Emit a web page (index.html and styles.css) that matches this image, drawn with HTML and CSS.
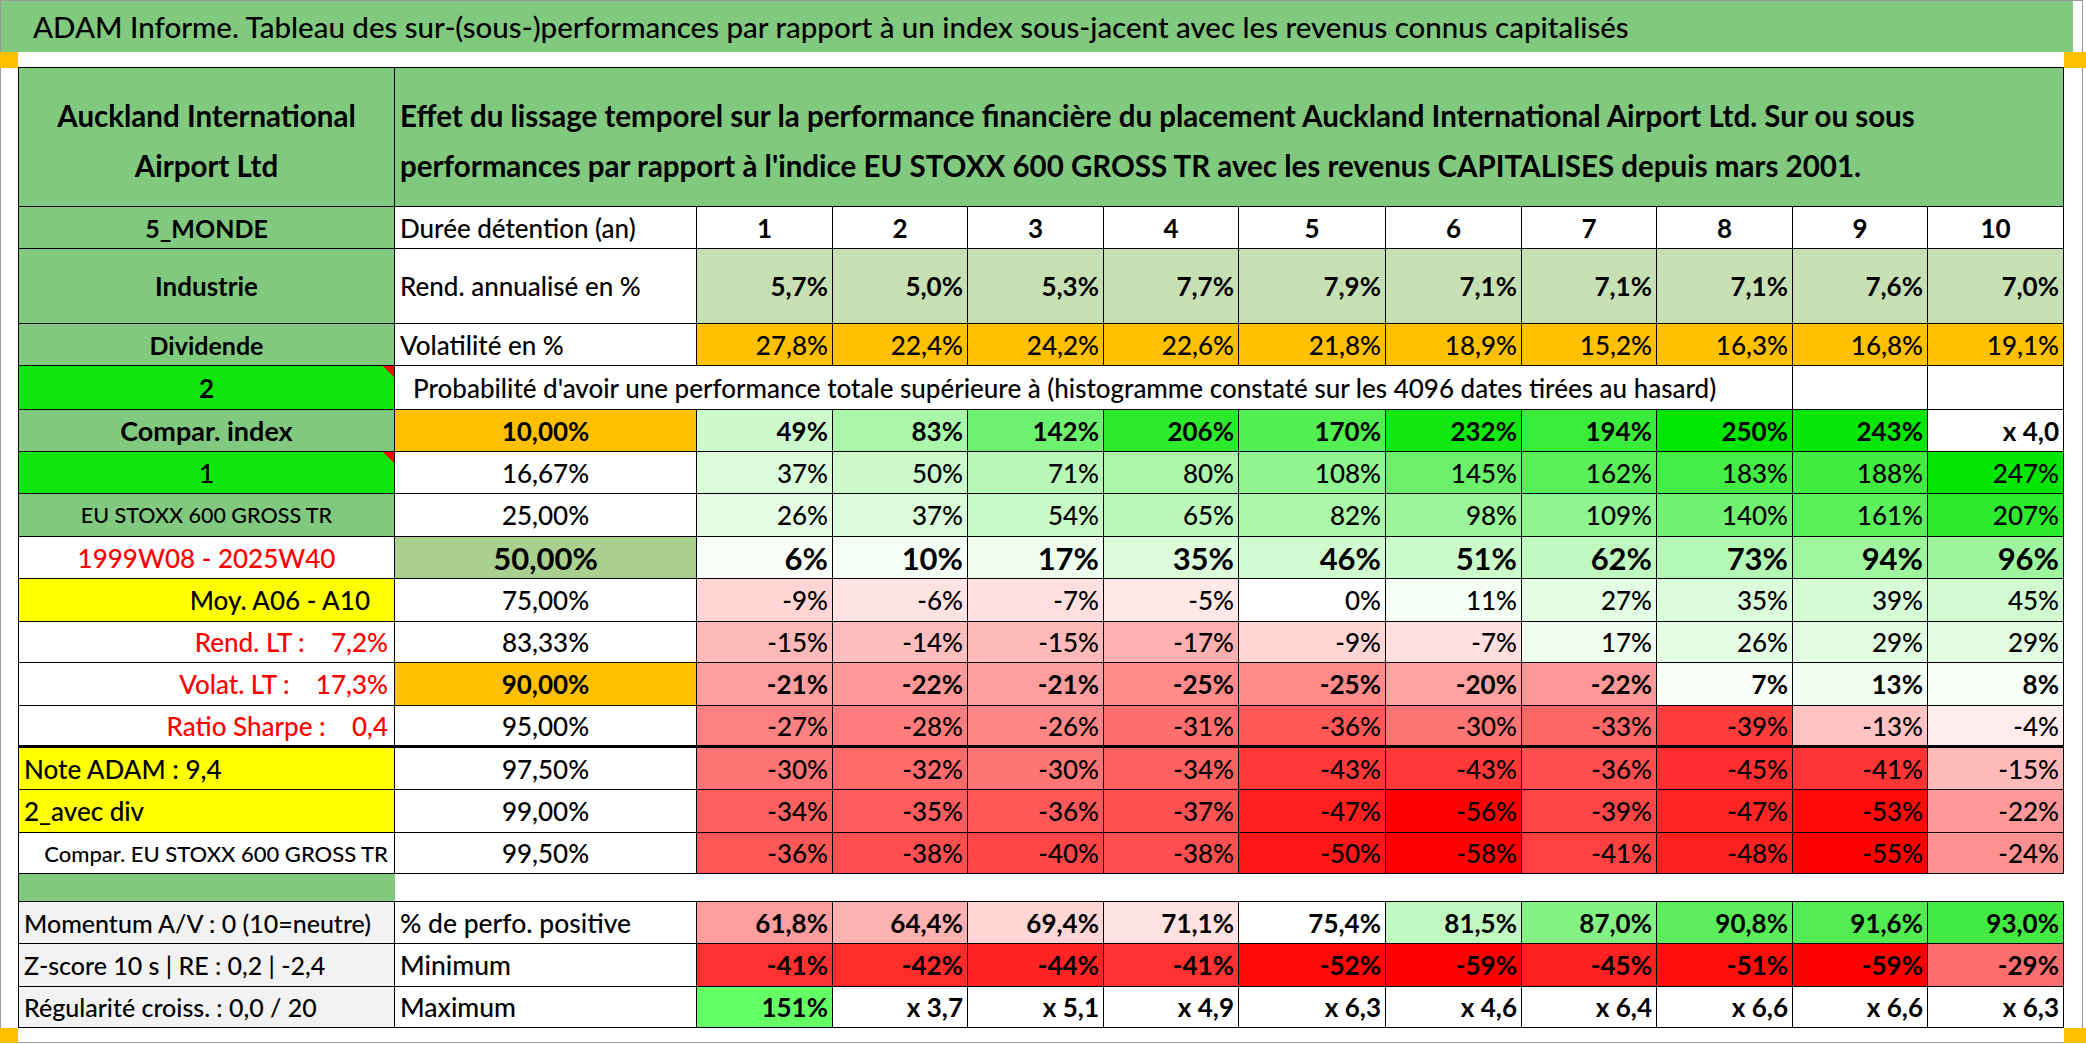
FILE: index.html
```html
<!DOCTYPE html>
<html lang="fr">
<head>
<meta charset="utf-8">
<title>ADAM Informe</title>
<link rel="stylesheet" href="styles.css">
</head>
<body>
<div class="sheet">
  <div class="title">ADAM Informe. Tableau des sur-(sous-)performances par rapport à un index sous-jacent avec les revenus connus capitalisés</div>
  <div class="spacer"></div>
  <div class="grid">
    <!-- header -->
    <div class="c g b hdr hdrA">Auckland International<br>Airport Ltd</div>
    <div class="c g b hdr hdrB">Effet du lissage temporel sur la performance financière du placement Auckland International Airport Ltd. Sur ou sous<br>performances par rapport à l'indice EU STOXX 600 GROSS TR avec les revenus CAPITALISES depuis mars 2001.</div>

    <!-- durée -->
    <div class="c g b lab">5_MONDE</div>
    <div class="c l">Durée détention (an)</div>
    <div class="c b">1</div><div class="c b">2</div><div class="c b">3</div><div class="c b">4</div><div class="c b">5</div>
    <div class="c b">6</div><div class="c b">7</div><div class="c b">8</div><div class="c b">9</div><div class="c b">10</div>

    <!-- rendement -->
    <div class="c g b lab ind">Industrie</div>
    <div class="c l">Rend. annualisé en %</div>
    <div class="c lg b n">5,7%</div><div class="c lg b n">5,0%</div><div class="c lg b n">5,3%</div><div class="c lg b n">7,7%</div><div class="c lg b n">7,9%</div>
    <div class="c lg b n">7,1%</div><div class="c lg b n">7,1%</div><div class="c lg b n">7,1%</div><div class="c lg b n">7,6%</div><div class="c lg b n">7,0%</div>

    <!-- volatilité -->
    <div class="c g b lab">Dividende</div>
    <div class="c l">Volatilité en %</div>
    <div class="c or n">27,8%</div><div class="c or n">22,4%</div><div class="c or n">24,2%</div><div class="c or n">22,6%</div><div class="c or n">21,8%</div>
    <div class="c or n">18,9%</div><div class="c or n">15,2%</div><div class="c or n">16,3%</div><div class="c or n">16,8%</div><div class="c or n">19,1%</div>

    <!-- probabilité -->
    <div class="c bg b note">2</div>
    <div class="c prob">Probabilité d'avoir une performance totale supérieure à (histogramme constaté sur les 4096 dates tirées au hasard)</div>
    <div class="c"></div><div class="c"></div>

    <!-- 10% -->
    <div class="c g b lab cix">Compar. index</div>
    <div class="c or b">10,00%</div>
    <div class="c b n" style="background:rgb(205,250,205)">49%</div>
    <div class="c b n" style="background:rgb(170,247,170)">83%</div>
    <div class="c b n" style="background:rgb(110,241,110)">142%</div>
    <div class="c b n" style="background:rgb(45,234,45)">206%</div>
    <div class="c b n" style="background:rgb(82,238,82)">170%</div>
    <div class="c b n" style="background:rgb(18,232,18)">232%</div>
    <div class="c b n" style="background:rgb(57,236,57)">194%</div>
    <div class="c b n" style="background:rgb(0,230,0)">250%</div>
    <div class="c b n" style="background:rgb(7,231,7)">243%</div>
    <div class="c b n">x 4,0</div>

    <!-- 16,67% -->
    <div class="c bg one note">1</div>
    <div class="c">16,67%</div>
    <div class="c n" style="background:rgb(217,251,217)">37%</div>
    <div class="c n" style="background:rgb(204,250,204)">50%</div>
    <div class="c n" style="background:rgb(183,248,183)">71%</div>
    <div class="c n" style="background:rgb(173,247,173)">80%</div>
    <div class="c n" style="background:rgb(145,244,145)">108%</div>
    <div class="c n" style="background:rgb(107,240,107)">145%</div>
    <div class="c n" style="background:rgb(90,239,90)">162%</div>
    <div class="c n" style="background:rgb(68,237,68)">183%</div>
    <div class="c n" style="background:rgb(63,236,63)">188%</div>
    <div class="c n" style="background:rgb(3,230,3)">247%</div>

    <!-- 25% -->
    <div class="c g sm">EU STOXX 600 GROSS TR</div>
    <div class="c">25,00%</div>
    <div class="c n" style="background:rgb(228,252,228)">26%</div>
    <div class="c n" style="background:rgb(217,251,217)">37%</div>
    <div class="c n" style="background:rgb(200,250,200)">54%</div>
    <div class="c n" style="background:rgb(189,248,189)">65%</div>
    <div class="c n" style="background:rgb(171,247,171)">82%</div>
    <div class="c n" style="background:rgb(155,245,155)">98%</div>
    <div class="c n" style="background:rgb(144,244,144)">109%</div>
    <div class="c n" style="background:rgb(112,241,112)">140%</div>
    <div class="c n" style="background:rgb(91,239,91)">161%</div>
    <div class="c n" style="background:rgb(44,234,44)">207%</div>

    <!-- 50% -->
    <div class="c red">1999W08 - 2025W40</div>
    <div class="c mid b big">50,00%</div>
    <div class="c n b big" style="background:rgb(249,254,249)">6%</div>
    <div class="c n b big" style="background:rgb(245,254,245)">10%</div>
    <div class="c n b big" style="background:rgb(238,253,238)">17%</div>
    <div class="c n b big" style="background:rgb(219,251,219)">35%</div>
    <div class="c n b big" style="background:rgb(208,250,208)">46%</div>
    <div class="c n b big" style="background:rgb(203,250,203)">51%</div>
    <div class="c n b big" style="background:rgb(192,249,192)">62%</div>
    <div class="c n b big" style="background:rgb(181,248,181)">73%</div>
    <div class="c n b big" style="background:rgb(159,246,159)">94%</div>
    <div class="c n b big" style="background:rgb(157,245,157)">96%</div>

    <!-- 75% -->
    <div class="c ye moy">Moy. A06 - A10</div>
    <div class="c">75,00%</div>
    <div class="c n" style="background:rgb(255,213,213)">-9%</div>
    <div class="c n" style="background:rgb(255,227,227)">-6%</div>
    <div class="c n" style="background:rgb(255,223,223)">-7%</div>
    <div class="c n" style="background:rgb(255,232,232)">-5%</div>
    <div class="c n">0%</div>
    <div class="c n" style="background:rgb(244,254,244)">11%</div>
    <div class="c n" style="background:rgb(227,252,227)">27%</div>
    <div class="c n" style="background:rgb(219,251,219)">35%</div>
    <div class="c n" style="background:rgb(215,251,215)">39%</div>
    <div class="c n" style="background:rgb(209,250,209)">45%</div>

    <!-- 83,33% -->
    <div class="c red r">Rend. LT :&nbsp;&nbsp;&nbsp; 7,2%</div>
    <div class="c">83,33%</div>
    <div class="c n" style="background:rgb(255,185,185)">-15%</div>
    <div class="c n" style="background:rgb(255,190,190)">-14%</div>
    <div class="c n" style="background:rgb(255,185,185)">-15%</div>
    <div class="c n" style="background:rgb(255,176,176)">-17%</div>
    <div class="c n" style="background:rgb(255,213,213)">-9%</div>
    <div class="c n" style="background:rgb(255,223,223)">-7%</div>
    <div class="c n" style="background:rgb(238,253,238)">17%</div>
    <div class="c n" style="background:rgb(228,252,228)">26%</div>
    <div class="c n" style="background:rgb(225,252,225)">29%</div>
    <div class="c n" style="background:rgb(225,252,225)">29%</div>

    <!-- 90% -->
    <div class="c red r">Volat. LT :&nbsp;&nbsp;&nbsp; 17,3%</div>
    <div class="c or b">90,00%</div>
    <div class="c n b" style="background:rgb(255,158,158)">-21%</div>
    <div class="c n b" style="background:rgb(255,153,153)">-22%</div>
    <div class="c n b" style="background:rgb(255,158,158)">-21%</div>
    <div class="c n b" style="background:rgb(255,139,139)">-25%</div>
    <div class="c n b" style="background:rgb(255,139,139)">-25%</div>
    <div class="c n b" style="background:rgb(255,162,162)">-20%</div>
    <div class="c n b" style="background:rgb(255,153,153)">-22%</div>
    <div class="c n b" style="background:rgb(248,254,248)">7%</div>
    <div class="c n b" style="background:rgb(242,254,242)">13%</div>
    <div class="c n b" style="background:rgb(247,254,247)">8%</div>

    <!-- 95% -->
    <div class="c red r thick">Ratio Sharpe :&nbsp;&nbsp;&nbsp; 0,4</div>
    <div class="c thick">95,00%</div>
    <div class="c n thick" style="background:rgb(255,130,130)">-27%</div>
    <div class="c n thick" style="background:rgb(255,125,125)">-28%</div>
    <div class="c n thick" style="background:rgb(255,134,134)">-26%</div>
    <div class="c n thick" style="background:rgb(255,111,111)">-31%</div>
    <div class="c n thick" style="background:rgb(255,88,88)">-36%</div>
    <div class="c n thick" style="background:rgb(255,116,116)">-30%</div>
    <div class="c n thick" style="background:rgb(255,102,102)">-33%</div>
    <div class="c n thick" style="background:rgb(255,60,60)">-39%</div>
    <div class="c n thick" style="background:rgb(255,195,195)">-13%</div>
    <div class="c n thick" style="background:rgb(255,236,236)">-4%</div>

    <!-- 97,5% -->
    <div class="c ye l">Note ADAM : 9,4</div>
    <div class="c">97,50%</div>
    <div class="c n" style="background:rgb(255,116,116)">-30%</div>
    <div class="c n" style="background:rgb(255,107,107)">-32%</div>
    <div class="c n" style="background:rgb(255,116,116)">-30%</div>
    <div class="c n" style="background:rgb(255,97,97)">-34%</div>
    <div class="c n" style="background:rgb(255,56,56)">-43%</div>
    <div class="c n" style="background:rgb(255,56,56)">-43%</div>
    <div class="c n" style="background:rgb(255,78,78)">-36%</div>
    <div class="c n" style="background:rgb(255,46,46)">-45%</div>
    <div class="c n" style="background:rgb(255,52,52)">-41%</div>
    <div class="c n" style="background:rgb(255,185,185)">-15%</div>

    <!-- 99% -->
    <div class="c ye l">2_avec div</div>
    <div class="c">99,00%</div>
    <div class="c n" style="background:rgb(255,97,97)">-34%</div>
    <div class="c n" style="background:rgb(255,93,93)">-35%</div>
    <div class="c n" style="background:rgb(255,88,88)">-36%</div>
    <div class="c n" style="background:rgb(255,83,83)">-37%</div>
    <div class="c n" style="background:rgb(255,30,30)">-47%</div>
    <div class="c n" style="background:rgb(255,0,0)">-56%</div>
    <div class="c n" style="background:rgb(255,70,70)">-39%</div>
    <div class="c n" style="background:rgb(255,37,37)">-47%</div>
    <div class="c n" style="background:rgb(255,9,9)">-53%</div>
    <div class="c n" style="background:rgb(255,153,153)">-22%</div>

    <!-- 99,5% -->
    <div class="c r cmp">Compar. EU STOXX 600 GROSS TR</div>
    <div class="c">99,50%</div>
    <div class="c n" style="background:rgb(255,88,88)">-36%</div>
    <div class="c n" style="background:rgb(255,79,79)">-38%</div>
    <div class="c n" style="background:rgb(255,70,70)">-40%</div>
    <div class="c n" style="background:rgb(255,79,79)">-38%</div>
    <div class="c n" style="background:rgb(255,23,23)">-50%</div>
    <div class="c n" style="background:rgb(255,0,0)">-58%</div>
    <div class="c n" style="background:rgb(255,65,65)">-41%</div>
    <div class="c n" style="background:rgb(255,32,32)">-48%</div>
    <div class="c n" style="background:rgb(255,0,0)">-55%</div>
    <div class="c n" style="background:rgb(255,144,144)">-24%</div>

    <!-- gap -->
    <div class="c g gapA"></div>
    <div class="c gapB"></div>

    <!-- % positive -->
    <div class="c gr l side">Momentum A/V : 0 (10=neutre)</div>
    <div class="c l stat">% de perfo. positive</div>
    <div class="c n b" style="background:rgb(255,158,158)">61,8%</div>
    <div class="c n b" style="background:rgb(255,178,178)">64,4%</div>
    <div class="c n b" style="background:rgb(255,214,214)">69,4%</div>
    <div class="c n b" style="background:rgb(255,226,226)">71,1%</div>
    <div class="c n b">75,4%</div>
    <div class="c n b" style="background:rgb(192,248,192)">81,5%</div>
    <div class="c n b" style="background:rgb(132,241,132)">87,0%</div>
    <div class="c n b" style="background:rgb(92,237,92)">90,8%</div>
    <div class="c n b" style="background:rgb(82,236,82)">91,6%</div>
    <div class="c n b" style="background:rgb(66,234,66)">93,0%</div>

    <!-- minimum -->
    <div class="c gr l side">Z-score 10 s | RE : 0,2 | -2,4</div>
    <div class="c l stat">Minimum</div>
    <div class="c n b" style="background:rgb(255,48,48)">-41%</div>
    <div class="c n b" style="background:rgb(255,44,44)">-42%</div>
    <div class="c n b" style="background:rgb(255,36,36)">-44%</div>
    <div class="c n b" style="background:rgb(255,48,48)">-41%</div>
    <div class="c n b" style="background:rgb(255,8,8)">-52%</div>
    <div class="c n b" style="background:rgb(255,0,0)">-59%</div>
    <div class="c n b" style="background:rgb(255,32,32)">-45%</div>
    <div class="c n b" style="background:rgb(255,12,12)">-51%</div>
    <div class="c n b" style="background:rgb(255,0,0)">-59%</div>
    <div class="c n b" style="background:rgb(255,110,110)">-29%</div>

    <!-- maximum -->
    <div class="c gr l side">Régularité croiss. : 0,0 / 20</div>
    <div class="c l stat">Maximum</div>
    <div class="c n b" style="background:rgb(100,255,100)">151%</div>
    <div class="c n b">x 3,7</div>
    <div class="c n b">x 5,1</div>
    <div class="c n b">x 4,9</div>
    <div class="c n b">x 6,3</div>
    <div class="c n b">x 4,6</div>
    <div class="c n b">x 6,4</div>
    <div class="c n b">x 6,6</div>
    <div class="c n b">x 6,6</div>
    <div class="c n b">x 6,3</div>
  </div>
  <div class="mark tl"></div>
  <div class="mark tr"></div>
  <div class="mark bl"></div>
  <div class="mark br"></div>
</div>
</body>
</html>
```

FILE: styles.css
```css
html, body {
  margin: 0;
  padding: 0;
  background: #ffffff;
}

body {
  font-family: "Lato", "Liberation Sans", sans-serif;
  color: #000000;
}

.sheet {
  position: relative;
  box-sizing: border-box;
  width: 2083px;
  height: 1043px;
  border: 1px solid #9a9a9a;
  background: #ffffff;
}

.title {
  height: 51px;
  margin-right: 9px;
  padding-left: 32px;
  background: #80c97f;
  font-size: 29.5px;
  font-weight: 500;
  line-height: 51px;
  white-space: nowrap;
}

.spacer {
  height: 15px;
}

.grid {
  display: grid;
  margin-left: 17px;
  width: 2045px;
  border-top: 1px solid #000;
  border-left: 1px solid #000;
  grid-template-columns: 376px 302px 136px 135px 136px 135px 147px 136px 135px 136px 135px 136px;
  grid-template-rows: 139px 42px 75px 42px 44px 42px 42px 43px 42px 43px 41px 43px 42px 42px 43px 41px 28px 42px 43px 41px;
}

.c {
  position: relative;
  box-sizing: border-box;
  display: flex;
  align-items: center;
  justify-content: center;
  border-right: 1px solid #000;
  border-bottom: 1px solid #000;
  font-size: 26px;
  font-weight: 500;
  white-space: nowrap;
  overflow: hidden;
  background: #ffffff;
}

.b { font-weight: 700; }

.n {
  justify-content: flex-end;
  padding-right: 4px;
}

.l {
  justify-content: flex-start;
  padding-left: 5px;
}

.r {
  justify-content: flex-end;
  padding-right: 6px;
}

.g { background: #80c97f; }
.lg { background: #c6e0b4; }
.or { background: #ffc000; }
.ye { background: #ffff00; }
.bg { background: #0ee60e; }
.gr { background: #f2f2f2; }
.mid { background: #a9d08e; }

.red { color: #ff0000; }

.hdr {
  font-size: 29.5px;
  line-height: 50px;
}

.hdrA {
  text-align: center;
  padding-top: 8px;
}

.hdrB {
  grid-column: 2 / span 11;
  justify-content: flex-start;
  padding-left: 5px;
  padding-top: 8px;
}

.lab { font-size: 25px; }

.ind { font-size: 26px; }

.cix { font-size: 27px; }

.one { font-size: 27px; }

.sm { font-size: 21.5px; }

.big { font-size: 31px; }

.moy { justify-content: flex-end; padding-right: 24px; }

.cmp { font-size: 22px; }

.side { font-size: 25px; }

.stat { font-size: 26.5px; }

.prob {
  grid-column: 2 / span 9;
  justify-content: flex-start;
  padding-left: 18px;
}

.note::after {
  content: "";
  position: absolute;
  top: 0;
  right: 0;
  border-top: 11px solid #ff0000;
  border-left: 11px solid transparent;
}

.thick { border-bottom: 3px solid #000; }

.gapA { border-right: none; }

.gapB {
  grid-column: 2 / span 11;
  border-right: none;
}

.mark {
  position: absolute;
  background: #ffc000;
}

.mark.tl { left: -1px; top: 51px; width: 18px; height: 16px; }
.mark.tr { left: 2063px; top: 51px; width: 22px; height: 16px; }
.mark.bl { left: -1px; top: 1027px; width: 18px; height: 16px; }
.mark.br { left: 2063px; top: 1027px; width: 22px; height: 16px; }
```
